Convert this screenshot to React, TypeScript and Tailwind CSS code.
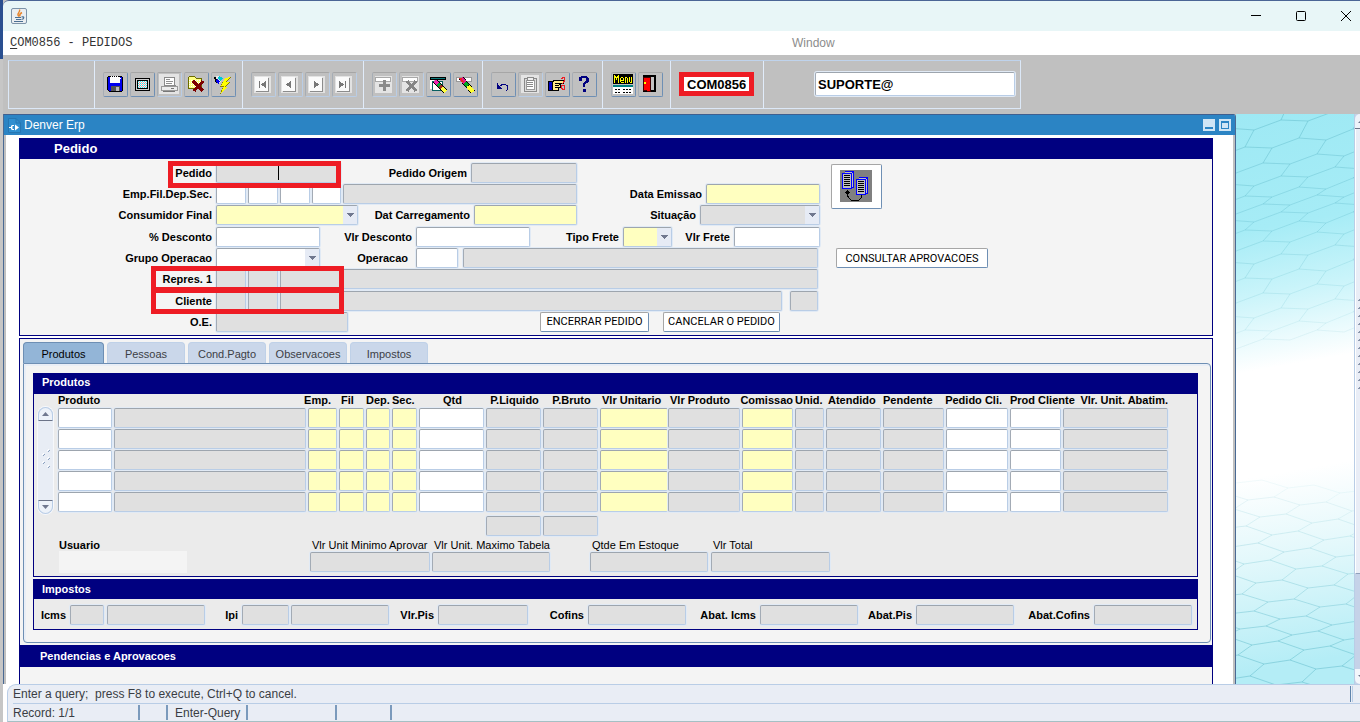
import React from "react";

type Tone = "white" | "gray" | "yellow";

const toneClass: Record<Tone, string> = {
  white: "bg-white",
  gray: "bg-[#e0e0e0]",
  yellow: "bg-[#ffffc0]",
};

const edge =
  "rounded-[2px] border border-t-[#9da5ae] border-l-[#a3abb5] border-r-[#b9cde6] border-b-[#b9cde6] shadow-[0_0_0_1px_#e1eaf5] outline-none";

function Field({ id, label, tone = "gray", w }: { id?: string; label?: string; tone?: Tone; w: string }) {
  return <input id={id} aria-label={label} className={`block h-5 shrink-0 px-1 ${edge} ${toneClass[tone]} ${w}`} />;
}

function Label({ htmlFor, w, children, pad = "pr-1" }: { htmlFor: string; w: string; children: React.ReactNode; pad?: string }) {
  return (
    <label htmlFor={htmlFor} className={`shrink-0 whitespace-nowrap text-right font-bold ${pad} ${w}`}>
      {children}
    </label>
  );
}

function Drop({ id, tone, w }: { id: string; tone: Tone; w: string }) {
  return (
    <div className={`relative h-5 shrink-0 ${w}`}>
      <select id={id} className={`block h-5 w-full appearance-none px-1 ${edge} border-r-[#a3abb5] border-b-[#a3abb5] ${toneClass[tone]}`}>
        <option value=""></option>
      </select>
      <span className="pointer-events-none absolute right-px top-px flex h-[18px] w-[14px] items-center justify-center bg-[#e6ebf5]">
        <svg width="8" height="4" viewBox="0 0 8 4" shapeRendering="crispEdges">
          <path d="M0 0H8L4 4Z" fill="#70788f" />
        </svg>
      </span>
    </div>
  );
}

function Row({ children }: { children: React.ReactNode }) {
  return <div className="flex h-[21px] items-start leading-5">{children}</div>;
}

function SectionTitle({ h, pad, size = "text-[11px]", children }: { h: string; pad: string; size?: string; children: React.ReactNode }) {
  return <h2 className={`flex items-center bg-[#000080] font-bold text-white ${h} ${pad} ${size}`}>{children}</h2>;
}

/* ---------- toolbar icons ---------- */

const icons: Record<string, React.ReactNode> = {
  save: (
    <>
      <path d="M0 1H1V0H15V1H16V15H15V16H2L0 14Z" fill="#000" />
      <path d="M1 1H15V15H2L1 14Z" fill="#0000f0" />
      <path d="M3 1H13V7H3Z" fill="#fff" />
      <path d="M4 0h1v1H4zM6 0h1v1H6zM8 0h1v1H8zM10 0h1v1h-1z" fill="#fff" />
      <path d="M4 10H13V15H4Z" fill="#555" />
      <path d="M9 11H12V15H9Z" fill="#bbb" />
      <path d="M13 2h1v1h-1z" fill="#fff" />
    </>
  ),
  screen: (
    <>
      <path d="M1 2H16V15H1Z" fill="#000" />
      <path d="M2 3H15V14H2Z" fill="#d0d0d0" />
      <path d="M3 4H14V13H3Z" fill="#000" />
      <path d="M4 5H13V12H4Z" fill="#eef4f4" />
      <path d="M4 5.500H13M4 7.500H13M4 9.500H13M4 11.500H13" stroke="#35dfe4" strokeDasharray="1 1" />
      <path d="M5 6.500H13M5 8.500H13M5 10.500H13" stroke="#f1a0a0" strokeDasharray="1 1" />
    </>
  ),
  print: (
    <>
      <path d="M-2 -2H18V18H-2Z" fill="#e4e4e4" />
      <path d="M3 1H13L14 9H3Z" fill="#fff" stroke="#8a8a8a" />
      <path d="M5 3.500H9M5 5.500H12M5 7.500H11" stroke="#909090" />
      <path d="M0 10H16V14H0Z" fill="#ededed" stroke="#9a9a9a" />
      <path d="M2 15.500H14M10 12.500H13" stroke="#777" />
    </>
  ),
  folder: (
    <>
      <path d="M0 2L2 0H6L8 2H13V12H0Z" fill="#ffff80" stroke="#6b6b00" />
      <path d="M1 4.500H13M1 6.500H13M1 8.500H13M1 10.500H13" stroke="#fff" strokeDasharray="1 1" />
      <path d="M5 5L15 15M15 5L6 15" stroke="#7d0000" strokeWidth="3" />
    </>
  ),
  flash: (
    <>
      <path d="M-1 1L2 0L8 2L5 7L1 5Z" fill="#e8e8e8" />
      <path d="M-1 1H1V3L3 5L1 7L0 4Z" fill="#000" />
      <path d="M2 3L5 5L4 8L1 6Z" fill="#0000f0" />
      <path d="M4 0L8 2L6 5L3 3Z" fill="#00c8d8" />
      <path d="M10 2L16 1L12 6H16L10 11H13L5 18L8 11H5Z" fill="#888000" />
      <path d="M10 2L15 1L11 6H15L9 11H12L6 17L9 10H6Z" fill="#ffff00" />
    </>
  ),
  clearRecord: (
    <>
      <path d="M0 1H15V3H0Z" fill="#087878" stroke="#000" />
      <path d="M0 4H4V13H0Z" fill="#fff" />
      <path d="M2 5H12V14H2Z" fill="#fff" stroke="#075f5f" />
      <path d="M5 5L16 16" stroke="#000" strokeWidth="5" />
      <path d="M5 5L8 8" stroke="#f020b0" strokeWidth="4" />
      <path d="M8 8L10 10" stroke="#00a838" strokeWidth="4" />
      <path d="M10 10L12 12" stroke="#a03020" strokeWidth="4" />
      <path d="M12 12L16 16" stroke="#ffff40" strokeWidth="4" />
    </>
  ),
  eraser: (
    <>
      <path d="M-1 1H14V5H-1Z" fill="#fff" stroke="#999" />
      <path d="M4 2L16 16" stroke="#000" strokeWidth="5" />
      <path d="M4 2L8 7" stroke="#e31c8c" strokeWidth="4" />
      <path d="M8 7L11 10" stroke="#00aa20" strokeWidth="4" />
      <path d="M11 10L16 16" stroke="#ffff30" strokeWidth="4" />
      <path d="M3 2L6 6" stroke="#f02020" strokeWidth="2" />
    </>
  ),
  add: (
    <>
      <path d="M-1 0H16V17H-1Z" fill="#e4e4e4" />
      <path d="M-1 1H14V5H-1Z" fill="#fff" stroke="#a8a8a8" />
      <path d="M8.500 4V15M3 9.500H14" stroke="#8a8a8a" strokeWidth="3" />
    </>
  ),
  remove: (
    <>
      <path d="M-1 0H16V17H-1Z" fill="#e4e4e4" />
      <path d="M-1 1H14V5H-1Z" fill="#fff" stroke="#a8a8a8" />
      <path d="M4 5L13 15M13 5L4 15" stroke="#858585" strokeWidth="3" />
    </>
  ),
  undo: (
    <>
      <path d="M2.500 7V12.500H7M3 12L7 8.500H10.500L12.500 10V13L11.500 15" fill="none" stroke="#000080" />
      <path d="M2 8L6 12V13H2Z" fill="#000080" />
    </>
  ),
  paste: (
    <>
      <path d="M-1 -1H17V17H-1Z" fill="#e4e4e4" />
      <path d="M2 2H14V15H2Z" fill="#ddd" stroke="#8a8a8a" />
      <path d="M4 4H12V13H4Z" fill="#fff" stroke="#9a9a9a" />
      <path d="M5 1H11V4H5Z" fill="#eee" stroke="#8a8a8a" />
      <path d="M5 6.500H11M5 8.500H11M5 10.500H11" stroke="#8a8a8a" />
    </>
  ),
  hand: (
    <>
      <path d="M-1 5H3V14H-1Z" fill="#0000c8" stroke="#000" />
      <path d="M3 6L6 4H14V7H10V8H11V11H9V14H3Z" fill="#ffe98a" stroke="#000" />
      <path d="M6 7.500H11M6 9.500H10M6 11.500H9" stroke="#000" />
      <path d="M12.500 3.500L13.500 1.500H15.500V5L12.500 8.500M12.500 9.500H15.500V13.500H13.500L12.500 11.500Z" fill="none" stroke="#ee1c24" />
    </>
  ),
  help: (
    <>
      <path d="M3 1H5V0H11V1H12V2H13V6H12V7H10V8H9V11H7V7H8V6H9V5H10V2H6V5H3Z" fill="#000080" />
      <path d="M7 13H10V16H7Z" fill="#000080" />
    </>
  ),
  door: (
    <>
      <path d="M2 0H13V15H2Z" fill="#c4c4c4" stroke="#000" strokeWidth="2" />
      <path d="M1 1H8V15H5L1 14Z" fill="#ff0000" stroke="#400000" />
      <path d="M2 6h2v2H2z" fill="#ffff00" />
    </>
  ),
};

function navIcon(dir: "first" | "prev" | "next" | "last") {
  return (
    <>
      <path d="M-1 0H16V17H-1Z" fill="#e2e2e2" />
      <path d="M1 2H14V16H1Z" fill="#8c8c8c" />
      <path d="M0 1H13V15H0Z" fill="#fafafa" />
      {dir === "first" && <path d="M4 5h1v7h-1zM11 5V12L6 8.500Z" fill="#777" />}
      {dir === "prev" && <path d="M9 5V12L4 8.500Z" fill="#777" />}
      {dir === "next" && <path d="M5 5V12L10 8.500Z" fill="#777" />}
      {dir === "last" && <path d="M9 5h1v7h-1zM3 5V12L8 8.500Z" fill="#777" />}
    </>
  );
}

function Tool({ label, flat, children }: { label: string; flat?: boolean; children: React.ReactNode }) {
  return (
    <button
      type="button"
      aria-label={label}
      className={`flex h-[25px] w-[25px] items-center rounded-[2px] border border-l-[#a6adb5] border-t-[#a6a6a6] pl-[3px] ${
        flat ? "border-b-[#b9cde6] border-r-[#b9cde6]" : "border-b-[#6e8fb4] border-r-[#6e8fb4]"
      }`}
    >
      <svg width="16" height="17" viewBox="0 0 16 17" shapeRendering="crispEdges" className="overflow-visible">
        {children}
      </svg>
    </button>
  );
}

function ToolGroup({ w, children }: { w: string; children?: React.ReactNode }) {
  return <div className={`flex shrink-0 gap-[2px] border-r border-[#e1ecfa] pl-2 pt-[11px] ${w}`}>{children}</div>;
}

function Toolbar() {
  return (
    <div className="h-[59px] shrink-0 bg-[#c0c0c0] pl-[5px] pt-[5px]">
      <div className="flex h-[49px] w-fit border border-[#dce8f7] border-t-[#bfd3ec]">
        <ToolGroup w="w-[86px]" />
        <ToolGroup w="w-[148px]">
          <Tool label="Salvar">{icons.save}</Tool>
          <Tool label="Tela">{icons.screen}</Tool>
          <Tool label="Imprimir" flat>{icons.print}</Tool>
          <Tool label="Sair">{icons.folder}</Tool>
          <Tool label="Executar">{icons.flash}</Tool>
        </ToolGroup>
        <ToolGroup w="w-[121px]">
          <Tool label="Primeiro" flat>{navIcon("first")}</Tool>
          <Tool label="Anterior" flat>{navIcon("prev")}</Tool>
          <Tool label="Proximo" flat>{navIcon("next")}</Tool>
          <Tool label="Ultimo" flat>{navIcon("last")}</Tool>
        </ToolGroup>
        <ToolGroup w="w-[119px]">
          <Tool label="Inserir" flat>{icons.add}</Tool>
          <Tool label="Remover" flat>{icons.remove}</Tool>
          <Tool label="Limpar registro">{icons.clearRecord}</Tool>
          <Tool label="Limpar">{icons.eraser}</Tool>
        </ToolGroup>
        <ToolGroup w="w-[120px]">
          <Tool label="Desfazer">{icons.undo}</Tool>
          <Tool label="Colar" flat>{icons.paste}</Tool>
          <Tool label="Cortar">{icons.hand}</Tool>
          <Tool label="Ajuda">{icons.help}</Tool>
        </ToolGroup>
        <ToolGroup w="w-[68px]">
          <Tool label="Menu">
            <path d="M-2 -2H18V8H-2Z" fill="#000" />
            <path
              d="M-0.500 7V-1M0.500 -0.500V2M1.500 1V3.500M2.500 -0.500V2M3.500 7V-1M8.500 5.500V7M5.500 2V6M6 6.500H9M6 1.500H8M8.500 2V4.500H6M10.500 7V1M11 1.500H12M12.500 2V7M14.500 1V6M15 6.500H16M16.500 1V7"
              fill="none"
              stroke="#ffff00"
            />
            <path d="M-2 9H18V11H-2Z" fill="#008080" />
            <path d="M-2 11H18V18H-2Z" fill="#fff" />
            <path d="M0 13.500H6M8 13.500H16M0 16.500H6M8 16.500H16" stroke="#000" strokeDasharray="2 1" />
          </Tool>
          <Tool label="Fechar">{icons.door}</Tool>
        </ToolGroup>
        <ToolGroup w="w-[93px]">
          <input
            aria-label="Programa"
            defaultValue="COM0856"
            className="h-[24px] w-[75px] border-[5px] border-[#ee1c24] bg-white px-[3px] text-[13px] font-bold leading-3 text-black outline-none"
          />
        </ToolGroup>
        <div className="w-[256px] shrink-0 pl-[51px] pt-[11px]">
          <input
            aria-label="Usuario conectado"
            defaultValue="SUPORTE@"
            className={`h-6 w-[200px] bg-white px-[2px] text-[13px] font-bold text-black ${edge}`}
          />
        </div>
      </div>
    </div>
  );
}

/* ---------- order header form ---------- */

const pushButton =
  "flex h-5 items-center justify-center whitespace-nowrap rounded-[2px] border border-b-[#6e8fb4] border-l-[#a6a6a6] border-r-[#6e8fb4] border-t-[#a6a6a6] bg-white font-['Roboto','Liberation_Sans',sans-serif] text-[11px]";

function OrderForm() {
  return (
    <div className="relative flex gap-[11px] pb-[2px]">
      <form className="flex w-[800px] shrink-0 flex-col gap-px pt-1" onSubmit={(e) => e.preventDefault()}>
        <div>
          <Row>
            <Label htmlFor="pedido" w="w-[196px]">Pedido</Label>
            <Field id="pedido" w="w-[125px]" />
            <Label htmlFor="origem" w="w-[130px]">Pedido Origem</Label>
            <Field id="origem" w="w-[106px]" />
          </Row>
          <Row>
            <Label htmlFor="emp" w="w-[196px]">Emp.Fil.Dep.Sec.</Label>
            <div className="flex gap-[2px]">
              <Field id="emp" tone="white" w="w-[30px]" />
              <Field label="Filial" tone="white" w="w-[30px]" />
              <Field label="Deposito" tone="white" w="w-[30px]" />
              <Field label="Secao" tone="white" w="w-[29px]" />
              <Field label="Nome da empresa" w="w-[234px]" />
            </div>
            <Label htmlFor="emissao" w="w-[129px]">Data Emissao</Label>
            <Field id="emissao" tone="yellow" w="w-[114px]" />
          </Row>
          <Row>
            <Label htmlFor="consumidor" w="w-[196px]">Consumidor Final</Label>
            <Drop id="consumidor" tone="yellow" w="w-[142px]" />
            <Label htmlFor="carregamento" w="w-[116px]">Dat Carregamento</Label>
            <Field id="carregamento" tone="yellow" w="w-[103px]" />
            <Label htmlFor="situacao" w="w-[123px]">Situação</Label>
            <Drop id="situacao" tone="gray" w="w-[120px]" />
          </Row>
        </div>
        <div>
          <Row>
            <Label htmlFor="pctdesc" w="w-[196px]">% Desconto</Label>
            <Field id="pctdesc" tone="white" w="w-[104px]" />
            <Label htmlFor="vlrdesc" w="w-[96px]">Vlr Desconto</Label>
            <Field id="vlrdesc" tone="white" w="w-[114px]" />
            <Label htmlFor="tipofrete" w="w-[93px]">Tipo Frete</Label>
            <Drop id="tipofrete" tone="yellow" w="w-[49px]" />
            <Label htmlFor="vlrfrete" w="w-[62px]">Vlr Frete</Label>
            <Field id="vlrfrete" tone="white" w="w-[86px]" />
          </Row>
          <Row>
            <Label htmlFor="grupo" w="w-[196px]">Grupo Operacao</Label>
            <Drop id="grupo" tone="white" w="w-[104px]" />
            <Label htmlFor="operacao" w="w-[96px]" pad="pr-2">Operacao</Label>
            <div className="flex gap-[5px]">
              <Field id="operacao" tone="white" w="w-[42px]" />
              <Field label="Descricao da operacao" w="w-[355px]" />
            </div>
          </Row>
          <Row>
            <Label htmlFor="repres" w="w-[196px]">Repres. 1</Label>
            <div className="flex gap-[2px]">
              <Field id="repres" w="w-[30px]" />
              <Field label="Filial do representante" w="w-[30px]" />
              <Field label="Codigo do representante" w="w-[60px]" />
              <Field label="Nome do representante" w="w-[476px]" />
            </div>
          </Row>
        </div>
        <div>
          <Row>
            <Label htmlFor="cliente" w="w-[196px]">Cliente</Label>
            <div className="flex gap-[2px]">
              <Field id="cliente" w="w-[30px]" />
              <Field label="Filial do cliente" w="w-[30px]" />
              <Field label="Codigo do cliente" w="w-[60px]" />
              <Field label="Nome do cliente" w="w-[440px]" />
            </div>
            <div className="pl-2">
              <Field label="UF do cliente" w="w-[28px]" />
            </div>
          </Row>
          <Row>
            <Label htmlFor="oe" w="w-[196px]">O.E.</Label>
            <Field id="oe" w="w-[132px]" />
            <div className="flex gap-[14px] pl-48">
              <button type="button" className={`${pushButton} w-[109px]`}>ENCERRAR PEDIDO</button>
              <button type="button" className={`${pushButton} w-[117px]`}>CANCELAR O PEDIDO</button>
            </div>
          </Row>
        </div>
      </form>
      <div className="flex flex-col gap-[39px] pt-[5px]">
        <button
          type="button"
          aria-label="Copiar pedido"
          className="flex h-[45px] w-[51px] items-center justify-center rounded-[2px] border border-b-[#6e8fb4] border-l-[#a6a6a6] border-r-[#6e8fb4] border-t-[#a6a6a6] bg-white"
        >
          <svg width="33" height="33" viewBox="0 0 33 33" shapeRendering="crispEdges">
            <path d="M0 0H32V32H0Z" fill="#808080" />
            <path d="M4.500 1.500H13.500V17.500H11.500M2.500 3.500H11.500V18.500H2.500ZM11.500 3.500L13.500 1.500" fill="#c0c0c0" stroke="#0000ff" />
            <path d="M18.500 7.500H27.500V23.500H25.500M16.500 9.500H25.500V24.500H16.500ZM25.500 9.500L27.500 7.500" fill="#c0c0c0" stroke="#0000ff" />
            <path
              d="M4 5.500H10M4 7.500H10M4 9.500H10M4 11.500H10M4 13.500H10M4 15.500H10M18 11.500H24M18 13.500H24M18 15.500H24M18 17.500H24M18 19.500H24M18 21.500H24"
              stroke="#000"
            />
            <path d="M7.500 20L10 23H5ZM6 23H9V24H6Z" fill="#000" />
            <path d="M7.500 24V26L11.500 30.500H18.500L21.500 27.500V25" fill="none" stroke="#000" />
          </svg>
        </button>
        <div className="pl-[5px]">
          <button type="button" className={`${pushButton} w-[152px]`}>CONSULTAR APROVACOES</button>
        </div>
      </div>
      {/* caret and highlight frames lie over the fields */}
      <div className="pointer-events-none absolute left-[258px] top-[7px] h-[14px] w-px bg-black" />
      <div className="pointer-events-none absolute left-[148px] top-[2px] h-[27px] w-[173px] border-[5px] border-[#ee1c24]" />
      <div className="pointer-events-none absolute left-[131px] top-[107px] h-[26px] w-[193px] border-[5px] border-[#ee1c24]" />
      <div className="pointer-events-none absolute left-[131px] top-[129px] h-[26px] w-[193px] border-[5px] border-[#ee1c24]" />
    </div>
  );
}

/* ---------- product grid ---------- */

type Column = { name: string; title?: string; w: string; tone: Tone; align: string; flush?: boolean };

const columns: Column[] = [
  { name: "Produto", w: "w-[56px]", tone: "white", align: "justify-start" },
  { name: "", title: "Descricao", w: "w-[194px]", tone: "gray", align: "justify-start" },
  { name: "Emp.", w: "w-[31px]", tone: "yellow", align: "justify-end pr-2" },
  { name: "Fil", w: "w-[27px]", tone: "yellow", align: "justify-start pl-[2px]" },
  { name: "Dep.", w: "w-[26px]", tone: "yellow", align: "justify-start" },
  { name: "Sec.", w: "w-[27px]", tone: "yellow", align: "justify-start" },
  { name: "Qtd", w: "w-[67px]", tone: "white", align: "justify-center" },
  { name: "P.Liquido", w: "w-[57px]", tone: "gray", align: "justify-center" },
  { name: "P.Bruto", w: "w-[57px]", tone: "gray", align: "justify-center" },
  { name: "Vlr Unitario", w: "w-[68px]", tone: "yellow", align: "justify-start pl-[2px]", flush: true },
  { name: "Vlr Produto", w: "w-[74px]", tone: "gray", align: "justify-start pl-[2px]" },
  { name: "Comissao", w: "w-[53px]", tone: "yellow", align: "justify-end pr-[2px]" },
  { name: "Unid.", w: "w-[31px]", tone: "gray", align: "justify-start" },
  { name: "Atendido", w: "w-[57px]", tone: "gray", align: "justify-start pl-[2px]" },
  { name: "Pendente", w: "w-[63px]", tone: "gray", align: "justify-start" },
  { name: "Pedido Cli.", w: "w-[64px]", tone: "white", align: "justify-end pr-2" },
  { name: "Prod Cliente", w: "w-[53px]", tone: "white", align: "justify-start" },
  { name: "Vlr. Unit. Abatim.", w: "w-[107px]", tone: "gray", align: "justify-end pr-[2px]" },
];

function GridScroll() {
  const endCap = "flex h-[14px] items-center justify-center border border-[#b9cde6] bg-[#edf2f9]";
  return (
    <div className="mt-[13px] flex h-[107px] w-[15px] shrink-0 flex-col justify-between rounded-full bg-[#e8edf5] ring-1 ring-[#f6f8fb]">
      <button type="button" aria-label="Rolar para cima" className={`${endCap} rounded-t-full border-b-[#6c7488]`}>
        <svg width="7" height="4" viewBox="0 0 7 4"><path d="M0 4H7L3.500 0Z" fill="#70788f" /></svg>
      </button>
      <svg width="15" height="24" viewBox="0 0 15 24" shapeRendering="crispEdges">
        <path d="M10 3L12 1M5 7L7 5M10 11L12 9M5 15L7 13M10 19L12 17" stroke="#8aa0bf" />
        <path d="M9 2L11 0M4 6L6 4M9 10L11 8M4 14L6 12M9 18L11 16" stroke="#fff" />
      </svg>
      <button type="button" aria-label="Rolar para baixo" className={`${endCap} rounded-b-full border-t-[#6c7488]`}>
        <svg width="7" height="4" viewBox="0 0 7 4"><path d="M0 0H7L3.500 4Z" fill="#70788f" /></svg>
      </button>
    </div>
  );
}

function ProductTable() {
  return (
    <table className="w-[1112px] table-fixed border-collapse">
      <thead>
        <tr>
          {columns.map((c) => (
            <th key={c.name} className={`h-[14px] p-0 align-top font-bold ${c.w}`}>
              <span className={`flex h-[14px] items-start whitespace-nowrap leading-[13px] ${c.align}`}>{c.name}</span>
            </th>
          ))}
        </tr>
      </thead>
      <tbody>
        {[1, 2, 3, 4, 5].map((row) => (
          <tr key={row}>
            {columns.map((c) => (
              <td key={c.name} className={`h-[21px] p-0 align-top ${c.flush ? "" : "pr-[2px]"}`}>
                <Field label={`${c.name || c.title} ${row}`} tone={c.tone} w="w-full" />
              </td>
            ))}
          </tr>
        ))}
      </tbody>
      <tfoot>
        <tr>
          <td colSpan={7} className="p-0" />
          <td className="p-0 pr-[2px] pt-[3px]"><Field label="Total P.Liquido" w="w-full" /></td>
          <td className="p-0 pr-[2px] pt-[3px]"><Field label="Total P.Bruto" w="w-full" /></td>
          <td colSpan={9} className="p-0" />
        </tr>
      </tfoot>
    </table>
  );
}

function Stacked({ id, w, children }: { id: string; w: string; children: React.ReactNode }) {
  return (
    <div className={`shrink-0 ${w}`}>
      <label htmlFor={id} className="block h-[13px] whitespace-nowrap pl-[2px] leading-[13px]">{children}</label>
      <Field id={id} w="w-full" />
    </div>
  );
}

const tabs = ["Pessoas", "Cond.Pagto", "Observacoes", "Impostos"];

function Details() {
  return (
    <section className="mt-[2px] flex grow flex-col border-x border-t border-[#000080] bg-[#f4f4f4] pt-[3px]">
      <div role="tablist" className="flex h-[21px] gap-[3px] pl-[3px] text-[#3c4045]">
        <button type="button" role="tab" aria-selected className="w-[81px] rounded-t-[4px] border border-b-0 border-[#6e8fb4] bg-[#93b5d7] pt-[2px] text-black">
          Produtos
        </button>
        {tabs.map((t) => (
          <button key={t} type="button" role="tab" aria-selected={false} className="w-[78px] whitespace-nowrap rounded-t-[4px] border border-b-0 border-[#bfd1e8] bg-[#cad7ea] pt-[2px]">
            {t}
          </button>
        ))}
      </div>
      <div className="ml-[3px] mr-px rounded-b-[4px] rounded-tr-[4px] border border-[#6e8fb4] pb-3 pl-[9px] pr-3 pt-[9px] shadow-[inset_1px_1px_0_1px_#e9eef6]">
        <SectionTitle h="h-[21px] leading-none" pad="pl-[9px] pb-[2px]">Produtos</SectionTitle>
        <div className="border border-t-0 border-[#000080] bg-[#ebebeb] pb-[3px]">
          <div className="flex gap-[5px] pl-1">
            <GridScroll />
            <ProductTable />
          </div>
          <div className="flex gap-[2px] pl-[25px] pt-[3px]">
            <div className="w-[249px] shrink-0">
              <label htmlFor="usuario" className="block h-3 font-bold leading-[13px]">Usuario</label>
              <input id="usuario" className="block h-[22px] w-32 bg-[#f4f4f4] px-1 outline-none" />
            </div>
            <Stacked id="minimo" w="w-[120px]">Vlr Unit Minimo Aprovar</Stacked>
            <Stacked id="maximo" w="w-[118px]">Vlr Unit. Maximo Tabela</Stacked>
            <div className="flex gap-[3px] pl-[38px]">
              <Stacked id="estoque" w="w-[118px]">Qtde Em Estoque</Stacked>
              <Stacked id="total" w="w-[119px]">Vlr Total</Stacked>
            </div>
          </div>
        </div>
        <div className="pt-[2px]">
          <SectionTitle h="h-5 leading-none" pad="pl-[9px]">Impostos</SectionTitle>
          <div className="flex border border-t-0 border-[#000080] bg-[#ebebeb] pb-[4px] pl-[5px] pt-[6px] leading-5">
            <Label htmlFor="icms" w="w-[31px]">Icms</Label>
            <div className="flex gap-[3px]">
              <Field id="icms" w="w-[34px]" />
              <Field label="Valor Icms" w="w-[98px]" />
            </div>
            <Label htmlFor="ipi" w="w-[37px]">Ipi</Label>
            <div className="flex gap-[2px]">
              <Field id="ipi" w="w-[47px]" />
              <Field label="Valor Ipi" w="w-[98px]" />
            </div>
            <Label htmlFor="pis" w="w-[49px]">Vlr.Pis</Label>
            <Field id="pis" w="w-[90px]" />
            <Label htmlFor="cofins" w="w-[60px]">Cofins</Label>
            <Field id="cofins" w="w-[98px]" />
            <Label htmlFor="abicms" w="w-[74px]">Abat. Icms</Label>
            <Field id="abicms" w="w-[98px]" />
            <Label htmlFor="abpis" w="w-[58px]">Abat.Pis</Label>
            <Field id="abpis" w="w-[98px]" />
            <Label htmlFor="abcofins" w="w-[80px]">Abat.Cofins</Label>
            <Field id="abcofins" w="w-[98px]" />
          </div>
        </div>
      </div>
      <div className="pt-[2px]">
        <SectionTitle h="h-[22px]" pad="pl-5">Pendencias e Aprovacoes</SectionTitle>
      </div>
    </section>
  );
}

/* ---------- desktop backdrop ---------- */

/* Honeycomb in perspective: each row is a zigzag whose low points join the high points of the next row. */
function meshRows(ys: number[], half: number, slope: number, lean: number) {
  return ys.map((y, k) => {
    const point = (i: number, row: number) => {
      const x = i * half + lean * row;
      const base = ys[row] + slope * x;
      return `${Math.round(x)} ${Math.round(base + ((i + row) % 2 === 0 ? 3 : -3))}`;
    };
    let d = "";
    for (let i = 0; i < 12; i++) d += `${i ? "L" : "M"}${point(i, k)}`;
    if (k + 1 < ys.length) {
      for (let i = k % 2; i < 12; i += 2) d += `M${point(i, k)}L${point(i, k + 1)}`;
    }
    return { d, y };
  });
}

const upperMesh = meshRows([-8, 16, 37, 56, 72, 86, 97, 108, 120, 134, 150, 168, 186, 204, 220, 232], 27, -0.16, -9);
const lowerMesh = meshRows([366, 382, 398, 414, 430, 446, 464, 482, 498, 512, 526, 544, 564], 26, 0.1, -14);

function Backdrop() {
  return (
    <div className="w-[118px] shrink-0 overflow-hidden bg-[linear-gradient(170deg,#9ee9f4_0%,#a6ecf6_20%,#c9f4fa_31%,#ffffff_44%,#ffffff_62%,#e3f8fb_76%,#b4edf6_95%)]">
      <svg width="118" height="570" viewBox="0 0 118 570" fill="none">
        <g stroke="#5fb9c9">
          {upperMesh.map((r) => (
            <path key={r.y} d={r.d} strokeOpacity={Math.max(0.12, 0.5 - r.y / 600)} />
          ))}
          {lowerMesh.map((r) => (
            <path key={r.y} d={r.d} strokeOpacity={Math.min(0.5, 0.08 + (r.y - 366) / 400)} />
          ))}
        </g>
      </svg>
    </div>
  );
}

function DesktopScroll() {
  return (
    <div className="flex w-[6px] shrink-0 flex-col overflow-hidden border-l border-[#b9cde6] bg-[#c5d2e8]">
      <button type="button" aria-label="Subir" className="flex h-[15px] w-[14px] shrink-0 items-center justify-center rounded-tl-[5px] border-b border-[#6c7488] bg-[#eef2f9]">
        <svg width="8" height="4" viewBox="0 0 8 4"><path d="M0 4H8L4 0Z" fill="#70788f" /></svg>
      </button>
      <div className="flex w-[14px] grow flex-col border-b border-l border-[#8fa0bc] border-l-white bg-[#e9edf6] pt-[168px]">
        <svg width="14" height="100" viewBox="0 0 14 100" shapeRendering="crispEdges">
          {Array.from({ length: 12 }, (_, i) => (
            <path key={i} d={`M2 ${i * 8 + 4}L5 ${i * 8 + 2}`} stroke="#8995ab" />
          ))}
        </svg>
      </div>
      <div className="h-[95px] shrink-0" />
      <button type="button" aria-label="Descer" className="flex h-[15px] w-[14px] shrink-0 items-center justify-center rounded-bl-[5px] bg-[#f3f6fb]">
        <svg width="8" height="4" viewBox="0 0 8 4"><path d="M0 0H8L4 4Z" fill="#70788f" /></svg>
      </button>
    </div>
  );
}

function ErpWindow() {
  const ctl = "flex h-3 w-3 items-center justify-center bg-[#cfe5f5]";
  return (
    <main className="flex min-w-0 grow flex-col overflow-hidden rounded-tr-[3px] border-x border-[#4a6a94]">
      <div className="flex h-[21px] shrink-0 items-center border-t border-[#3f5f8f] bg-[#2b84c4] pl-1 pr-1 text-xs text-white">
        <svg width="13" height="16" viewBox="0 0 13 16">
          <path d="M0.500 1.500H8L12.500 6V15.500H0.500Z" fill="#2f8fd0" stroke="#2676b2" />
          <path d="M8 1.500V6H12.500" fill="none" stroke="#2676b2" />
          <path d="M6 8H4L3 9V10H1V11H3V12L4 13H6V12H4.500V9H6Z" fill="#fff" />
          <path d="M7 7.500L11 10.500L7 13.500Z" fill="#fff" />
        </svg>
        <h1 className="pl-[3px]">Denver Erp</h1>
        <div className="ml-auto flex gap-1">
          <button type="button" aria-label="Minimizar janela" className={ctl}>
            <svg width="12" height="12" shapeRendering="crispEdges"><path d="M2 8H10V10H2Z" fill="#2b84c4" /></svg>
          </button>
          <button type="button" aria-label="Maximizar janela" className={ctl}>
            <svg width="12" height="12" shapeRendering="crispEdges">
              <path d="M2.500 3.500H9.500V9.500H2.500Z" fill="none" stroke="#2b84c4" />
              <path d="M2 2H10V4H2Z" fill="#2b84c4" />
            </svg>
          </button>
        </div>
      </div>
      <div className="flex min-h-0 grow flex-col overflow-hidden border-x-2 border-[#c0c0c0] bg-white pl-[13px] pr-5 pt-[3px]">
        <section className="shrink-0 border border-t-0 border-[#000080] bg-[#f4f4f4]">
          <SectionTitle h="h-[21px]" pad="pl-[34px]" size="text-[13px]">Pedido</SectionTitle>
          <OrderForm />
        </section>
        <Details />
      </div>
    </main>
  );
}

function TitleBar() {
  const ctl = "flex h-7 w-7 items-center justify-center";
  return (
    <header className="flex h-[31px] shrink-0 items-center rounded-tl-[6px] border-t border-[#4a6595] bg-[#e8f6f7] pl-2">
      <svg width="16" height="16" viewBox="0 0 16 16">
        <rect x="0.500" y="0.500" width="15" height="15" rx="1.500" fill="#eaeef1" stroke="#7c93a8" />
        <path d="M8 8.500C4.500 5.500 10 4.500 8.500 1.500M9 8.500C8 6.500 9 5.500 11 4.500" fill="none" stroke="#e8862d" strokeWidth="1.400" />
        <path d="M4 9.500H10M5 11.500H10M3 13.500H12M10.500 9C13.500 8 13.500 11 10.500 11.500" fill="none" stroke="#4a6f92" strokeWidth="1.200" />
      </svg>
      <div className="ml-auto flex gap-[17px]">
        <button type="button" aria-label="Minimizar" className={ctl}>
          <svg width="10" height="10" shapeRendering="crispEdges"><path d="M0 4H10V5H0Z" fill="#000" /></svg>
        </button>
        <button type="button" aria-label="Maximizar" className={ctl}>
          <svg width="10" height="10"><rect x="0.500" y="0.500" width="9" height="9" rx="1" fill="none" stroke="#000" /></svg>
        </button>
        <button type="button" aria-label="Fechar" className={ctl}>
          <svg width="10" height="10"><path d="M0 0L10 10M10 0L0 10" stroke="#000" /></svg>
        </button>
      </div>
    </header>
  );
}

function StatusBar() {
  const cell = "h-[15px] shrink-0 border-r-2 border-[#7b9abc]";
  return (
    <footer className="h-[38px] shrink-0 bg-white pl-1">
      <div className="flex h-full flex-col rounded-tl-[9px] border-b border-l border-t border-[#b9cde6] border-b-[#a5c0c4] bg-[#e9edf5] pl-[5px] text-xs text-[#3a3d44]">
        <div className="flex h-[19px] items-center border-b border-[#b9cde6]">
          <p className="whitespace-pre leading-[18px]">{"Enter a query;  press F8 to execute, Ctrl+Q to cancel."}</p>
          <span className="ml-auto mr-[7px] h-4 w-[3px] border-l border-r border-l-[#5f83aa] border-r-[#b9cde6]" />
        </div>
        <div className="flex grow items-center leading-[16px]">
          <div className={`${cell} w-[127px]`}>Record: 1/1</div>
          <div className={`${cell} w-[28px]`} />
          <div className={`${cell} w-[80px] whitespace-nowrap pl-[7px]`}>Enter-Query</div>
          <div className={`${cell} w-[89px]`} />
          <div className={`${cell} w-[55px]`} />
        </div>
      </div>
    </footer>
  );
}

export default function App() {
  return (
    <div className="flex h-screen overflow-hidden bg-[#c4c4c4] font-['Liberation_Sans',Arial,sans-serif] text-[11px] leading-none text-black">
      <div className="w-[3px] shrink-0 bg-[linear-gradient(#2a4f90_59px,#c6c6c6_59px)]" />
      <div className="flex min-w-0 grow flex-col">
        <TitleBar />
        <nav className="grid h-6 shrink-0 grid-cols-[782px_1fr] items-center bg-white pl-[7px] text-xs">
          <a href="#pedidos" className="font-['Liberation_Mono',monospace] text-[#333]">
            <span className="underline underline-offset-2">C</span>OM0856 - PEDIDOS
          </a>
          <a href="#window" className="text-[#8c8c8c]">Window</a>
        </nav>
        <Toolbar />
        <div className="flex min-h-0 grow overflow-hidden">
          <ErpWindow />
          <Backdrop />
          <DesktopScroll />
        </div>
        <StatusBar />
      </div>
    </div>
  );
}
